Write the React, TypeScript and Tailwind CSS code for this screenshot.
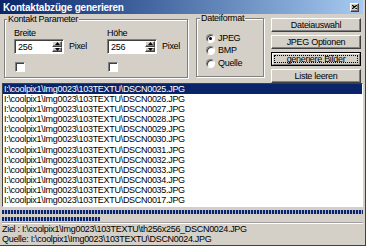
import type { ReactNode } from 'react'

const FILES = [
  '0025', '0026', '0027', '0028', '0029', '0030',
  '0031', '0032', '0033', '0034', '0035', '0017',
]
const DIR = 'I:\\coolpix1\\Img0023\\103TEXTU\\'

// classic win98-style raised face
const raised =
  'bg-[#d4d0c8] border border-t-white border-l-white border-r-[#404040] border-b-[#404040] shadow-[inset_-1px_-1px_0_#808080]'
const sunken =
  'bg-white border border-t-[#808080] border-l-[#808080] border-r-white border-b-white shadow-[inset_1px_1px_0_#404040]'

function Arrow({ up }: { up?: boolean }) {
  return (
    <svg width="5" height="3" viewBox="0 0 5 3">
      <polygon points={up ? '0,3 5,3 2.5,0' : '0,0 5,0 2.5,3'} fill="#000" />
    </svg>
  )
}

function NumField({ value }: { value: string }) {
  return (
    <div className={`${sunken} flex h-[15px] w-[50px] items-stretch p-[1px] pl-[2px]`}>
      <span className="flex-1 pl-[1px] leading-[12px]">{value}</span>
      <div className="flex w-[10px] flex-col">
        <div className={`${raised} flex flex-1 items-center justify-center`}>
          <Arrow up />
        </div>
        <div className={`${raised} flex flex-1 items-center justify-center`}>
          <Arrow />
        </div>
      </div>
    </div>
  )
}

function Checkbox() {
  return <div className={`${sunken} h-[10px] w-[10px]`} />
}

function SizeColumn({ label, first }: { label: string; first?: boolean }) {
  return (
    <div className={`flex flex-col ${first ? 'w-[93px]' : ''}`}>
      <span className="h-[9px] leading-[9px]">{label}</span>
      <div className="mt-[1px] flex items-center">
        <NumField value="256" />
        <span className="ml-[5px]">Pixel</span>
      </div>
      <div className="mt-[8px] ml-[1px]">
        <Checkbox />
      </div>
    </div>
  )
}

function Radio({ label, checked }: { label: string; checked?: boolean }) {
  return (
    <div className="flex h-[12.5px] items-center">
      <div className="flex h-[9px] w-[9px] items-center justify-center rounded-full border border-t-[#808080] border-l-[#808080] border-r-white border-b-white bg-white shadow-[inset_1px_1px_0_#404040]">
        {checked && <div className="h-[3px] w-[3px] rounded-full bg-black" />}
      </div>
      <span className="ml-[3px]">{label}</span>
    </div>
  )
}

function Button({ children, focused }: { children: ReactNode; focused?: boolean }) {
  if (focused) {
    return (
      <div className="h-[14px] border border-black">
        <div className="flex h-full border border-t-white border-l-white border-r-[#808080] border-b-[#808080] bg-[#d4d0c8] p-[1px]">
          <div className="flex flex-1 items-center justify-center border border-dotted border-black leading-none">
            {children}
          </div>
        </div>
      </div>
    )
  }
  return (
    <div className={`${raised} flex h-[14px] items-center justify-center leading-none`}>
      {children}
    </div>
  )
}

export default function App() {
  return (
    <div
      className="flex h-[246px] w-[366px] flex-col overflow-hidden border-r border-b border-[#404040] bg-[#d4d0c8] pr-[2px] text-[9px] tracking-[-0.3px] text-black"
      style={{ fontFamily: '"Liberation Sans", Arial, sans-serif' }}
    >
      {/* title bar */}
      <div className="flex h-[14px] shrink-0 items-center bg-linear-to-r from-[#0a246a] to-[#a6caf0] pl-[3px] pr-[4px]">
        <span className="flex-1 text-[10px] font-bold tracking-[-0.2px] text-white">Kontaktabzüge generieren</span>
        <div className={`${raised} flex h-[9px] w-[9px] items-center justify-center`}>
          <svg width="5" height="4" viewBox="0 0 5 4">
            <path d="M0 0L5 4M5 0L0 4" stroke="#000" strokeWidth="1.2" />
          </svg>
        </div>
      </div>

      {/* top controls */}
      <div className="flex h-[69px] shrink-0 items-start pl-[2px]">
        <fieldset className="ml-[2px] h-[64px] w-[184px] min-w-0 border border-[#808080] pl-[2px] shadow-[inset_1px_1px_0_#fff,1px_1px_0_#fff]">
          <legend className="h-[10px] bg-[#d4d0c8] px-[1px] leading-[10px]">Kontakt Parameter</legend>
          <div className="flex pt-[5px] pl-[7px]">
            <SizeColumn label="Breite" first />
            <SizeColumn label="Höhe" />
          </div>
        </fieldset>

        <fieldset className="ml-[8px] h-[63px] w-[68px] min-w-0 border border-[#808080] pl-[3px] shadow-[inset_1px_1px_0_#fff,1px_1px_0_#fff]">
          <legend className="h-[8px] bg-[#d4d0c8] px-[1px] leading-[8px]">Dateiformat</legend>
          <div className="flex flex-col pt-[10px] pl-[6px]">
            <Radio label="JPEG" checked />
            <Radio label="BMP" />
            <Radio label="Quelle" />
          </div>
        </fieldset>

        <div className="mt-[4px] ml-[7px] flex w-[90px] flex-col gap-[3px]">
          <Button>Dateiauswahl</Button>
          <Button>JPEG Optionen</Button>
          <Button focused>generiere Bilder</Button>
          <Button>Liste leeren</Button>
        </div>
      </div>

      {/* file list */}
      <div className="ml-[2px] flex h-[124px] shrink-0 flex-col overflow-hidden border border-t-[#404040] border-l-[#404040] border-r-white border-b-white bg-white">
        {FILES.map((n, i) => (
          <div
            key={n}
            className={`h-[10.1px] shrink-0 pl-[1px] leading-[10.1px] whitespace-nowrap ${
              i === 0 ? 'bg-[#0a246a] text-white' : ''
            }`}
          >
            {DIR}DSCN{n}.JPG
          </div>
        ))}
      </div>

      {/* progress */}
      <div className="mt-[3px] ml-[2px] h-[4px] shrink-0 bg-[repeating-linear-gradient(90deg,#0a246a_0_2px,#aab2cf_2px_3px)]" />
      <div className="mt-[3px] ml-[2px] h-[4px] w-[98px] shrink-0 bg-[repeating-linear-gradient(90deg,#0a246a_0_2px,#aab2cf_2px_3px)]" />
      <div className="mt-[1px] ml-[2px] h-[2px] shrink-0 border-t border-b border-t-[#a0a0a0] border-b-white" />

      {/* status */}
      <div className="flex flex-col pl-[2px] leading-[10px] whitespace-nowrap">
        <span>Ziel : {DIR}th256x256_DSCN0024.JPG</span>
        <span>Quelle: {DIR}DSCN0024.JPG</span>
      </div>
    </div>
  )
}
